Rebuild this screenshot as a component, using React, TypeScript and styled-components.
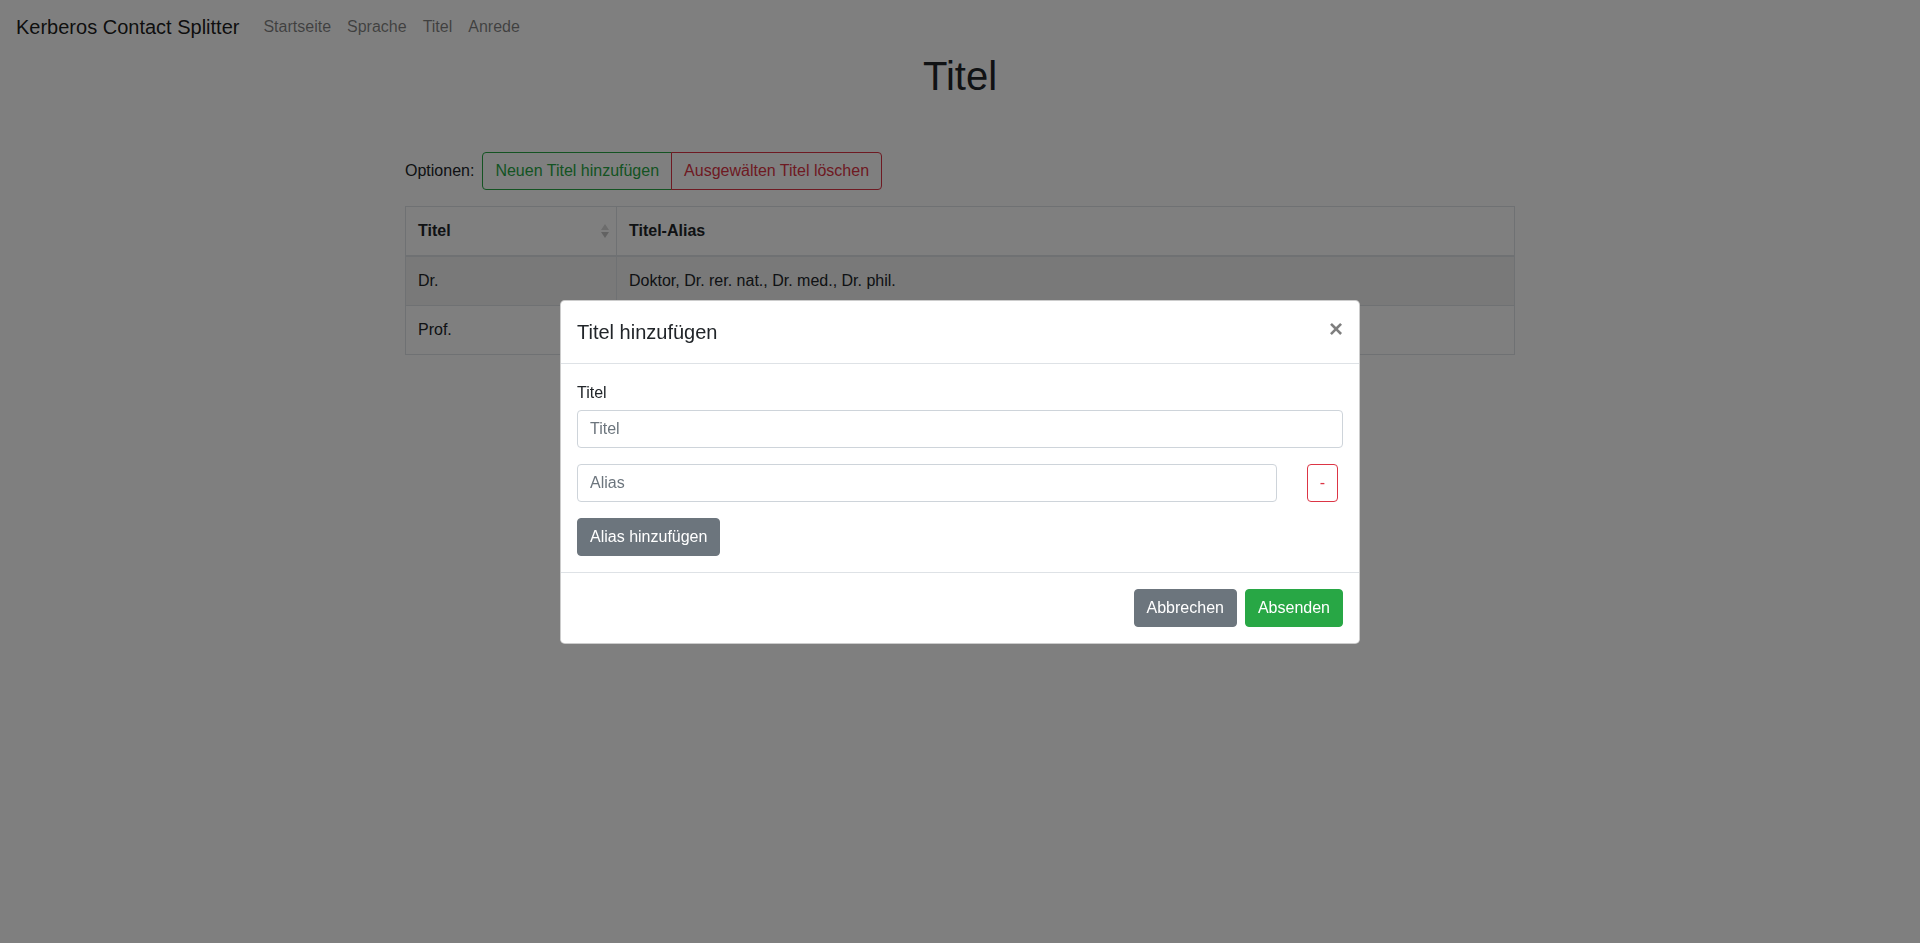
import React from "react";
import styled, { createGlobalStyle } from "styled-components";

const Global = createGlobalStyle`
  * { box-sizing: border-box; }
  html, body { margin: 0; padding: 0; }
  body {
    font-family: "Liberation Sans", Arial, Helvetica, sans-serif;
    font-size: 16px;
    line-height: 1.5;
    color: #212529;
    background: #fff;
  }
`;

const Navbar = styled.nav`
  display: flex;
  align-items: center;
  padding: 7px 16px 8px;
`;

const Brand = styled.a`
  font-size: 20px;
  line-height: 30px;
  padding: 5px 0;
  margin-right: 16px;
  color: rgba(0, 0, 0, 0.9);
  text-decoration: none;
`;

const NavLinks = styled.div`
  display: flex;
`;

const NavLink = styled.a`
  padding: 8px 8px;
  color: rgba(0, 0, 0, 0.5);
  text-decoration: none;
`;

const PageTitle = styled.h1`
  margin: -3px 0 8px;
  font-size: 40px;
  font-weight: 500;
  line-height: 1.2;
  text-align: center;
`;

const Container = styled.div`
  width: 1140px;
  margin: 0 auto;
  padding: 0 15px;
`;

const OptionsRow = styled.div`
  margin-top: 52px;
  margin-bottom: 16px;
  display: flex;
  align-items: center;
`;

const OptionsLabel = styled.span`
  margin-right: 8px;
`;

const BtnGroup = styled.div`
  display: inline-flex;
`;

const OutlineBtn = styled.button<{ $tone: string; $pos: "first" | "last" }>`
  font-family: inherit;
  font-size: 16px;
  line-height: 24px;
  padding: 6px 12px;
  background: transparent;
  color: ${(p) => p.$tone};
  border: 1px solid ${(p) => p.$tone};
  border-radius: ${(p) => (p.$pos === "first" ? "4px 0 0 4px" : "0 4px 4px 0")};
  margin-left: ${(p) => (p.$pos === "last" ? "-1px" : "0")};
  cursor: pointer;
`;

const Table = styled.table`
  width: 100%;
  border-collapse: collapse;
  border: 1px solid #dee2e6;
  margin-bottom: 16px;
`;

const Th = styled.th<{ $w?: number }>`
  position: relative;
  text-align: left;
  font-weight: 700;
  padding: 12px;
  border: 1px solid #dee2e6;
  border-bottom: 2px solid #dee2e6;
  width: ${(p) => (p.$w ? `${p.$w}px` : "auto")};
`;

const Td = styled.td`
  padding: 12px;
  border: 1px solid #dee2e6;
`;

const Tr = styled.tr<{ $striped?: boolean }>`
  background: ${(p) => (p.$striped ? "rgba(0,0,0,0.05)" : "transparent")};
`;

const SortIcon = styled.svg`
  position: absolute;
  right: 6px;
  top: 50%;
  transform: translateY(-50%);
`;

const Backdrop = styled.div`
  position: fixed;
  inset: 0;
  background: rgba(0, 0, 0, 0.5);
  display: flex;
  align-items: center;
  justify-content: center;
`;

const Modal = styled.div`
  width: 800px;
  background: #fff;
  border: 1px solid rgba(0, 0, 0, 0.2);
  border-radius: 4.8px;
  display: flex;
  flex-direction: column;
`;

const ModalHeader = styled.div`
  display: flex;
  align-items: flex-start;
  justify-content: space-between;
  padding: 16px;
  border-bottom: 1px solid #dee2e6;
`;

const ModalTitle = styled.h5`
  margin: 0;
  font-size: 20px;
  font-weight: 500;
  line-height: 1.5;
`;

const Close = styled.button`
  padding: 16px;
  margin: -16px -16px -16px auto;
  background: transparent;
  border: 0;
  font-family: inherit;
  font-size: 24px;
  font-weight: 700;
  line-height: 1;
  color: #000;
  text-shadow: 0 1px 0 #fff;
  opacity: 0.5;
  cursor: pointer;
`;

const ModalBody = styled.div`
  padding: 16px;
`;

const FormGroup = styled.div`
  margin-bottom: 16px;
`;

const Label = styled.label`
  display: inline-block;
  margin-top: 1px;
  margin-bottom: 5px;
`;

const Input = styled.input`
  display: block;
  width: 100%;
  height: 38px;
  padding: 6px 12px;
  font-family: inherit;
  font-size: 16px;
  line-height: 24px;
  color: #495057;
  background: #fff;
  border: 1px solid #ced4da;
  border-radius: 4px;
  &::placeholder {
    color: #6c757d;
  }
`;

const Row = styled.div`
  display: flex;
  margin: 0 -15px 16px;
`;

const Col = styled.div<{ $span: number }>`
  flex: 0 0 ${(p) => (p.$span / 12) * 100}%;
  max-width: ${(p) => (p.$span / 12) * 100}%;
  padding: 0 15px;
`;

const Btn = styled.button<{ $bg: string }>`
  font-family: inherit;
  font-size: 16px;
  line-height: 24px;
  padding: 6px 12px;
  color: #fff;
  background: ${(p) => p.$bg};
  border: 1px solid ${(p) => p.$bg};
  border-radius: 4px;
  cursor: pointer;
`;

const MinusBtn = styled.button`
  font-family: inherit;
  font-size: 16px;
  line-height: 24px;
  padding: 6px 12px;
  color: #dc3545;
  background: transparent;
  border: 1px solid #dc3545;
  border-radius: 4px;
  cursor: pointer;
`;

const ModalFooter = styled.div`
  display: flex;
  justify-content: flex-end;
  align-items: center;
  padding: 12px;
  border-top: 1px solid #dee2e6;
  gap: 8px;
  & > * {
    margin: 4px;
  }
  & > * + * {
    margin-left: -4px;
  }
`;

export default function App() {
  return (
    <>
      <Global />
      <Navbar>
        <Brand href="#">Kerberos Contact Splitter</Brand>
        <NavLinks>
          <NavLink href="#">Startseite</NavLink>
          <NavLink href="#">Sprache</NavLink>
          <NavLink href="#">Titel</NavLink>
          <NavLink href="#">Anrede</NavLink>
        </NavLinks>
      </Navbar>
      <PageTitle>Titel</PageTitle>
      <Container>
        <OptionsRow>
          <OptionsLabel>Optionen:</OptionsLabel>
          <BtnGroup>
            <OutlineBtn $tone="#28a745" $pos="first">Neuen Titel hinzufügen</OutlineBtn>
            <OutlineBtn $tone="#dc3545" $pos="last">Ausgewälten Titel löschen</OutlineBtn>
          </BtnGroup>
        </OptionsRow>
        <Table>
          <thead>
            <tr>
              <Th $w={211}>
                Titel
                <SortIcon width="10" height="16" viewBox="0 0 10 16">
                  <path d="M5 1 L9 7 L1 7 Z" fill="#d8d8d8" />
                  <path d="M1 9 L9 9 L5 15 Z" fill="#c4c4c4" />
                </SortIcon>
              </Th>
              <Th>Titel-Alias</Th>
            </tr>
          </thead>
          <tbody>
            <Tr $striped>
              <Td>Dr.</Td>
              <Td>Doktor, Dr. rer. nat., Dr. med., Dr. phil.</Td>
            </Tr>
            <Tr>
              <Td>Prof.</Td>
              <Td>Professor</Td>
            </Tr>
          </tbody>
        </Table>
      </Container>
      <Backdrop>
        <Modal>
          <ModalHeader>
            <ModalTitle>Titel hinzufügen</ModalTitle>
            <Close aria-label="Close">×</Close>
          </ModalHeader>
          <ModalBody>
            <FormGroup>
              <Label>Titel</Label>
              <Input placeholder="Titel" />
            </FormGroup>
            <Row>
              <Col $span={11}>
                <Input placeholder="Alias" />
              </Col>
              <Col $span={1}>
                <MinusBtn>-</MinusBtn>
              </Col>
            </Row>
            <Btn $bg="#6c757d">Alias hinzufügen</Btn>
          </ModalBody>
          <ModalFooter>
            <Btn $bg="#6c757d">Abbrechen</Btn>
            <Btn $bg="#28a745">Absenden</Btn>
          </ModalFooter>
        </Modal>
      </Backdrop>
    </>
  );
}
